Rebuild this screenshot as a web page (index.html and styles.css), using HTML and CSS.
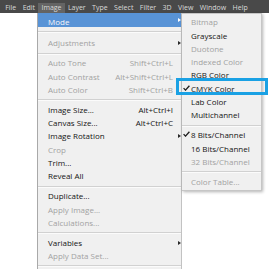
FILE: index.html
```html
<!DOCTYPE html>
<html lang="en">
<head>
    <meta charset="UTF-8">
    <meta name="viewport" content="width=device-width, initial-scale=1.0">
    <title>Image Mode Menu</title>
    <link rel="stylesheet" href="styles.css">
</head>
<body>

<div class="menubar">
    <span>File</span>
    <span>Edit</span>
    <span class="open">Image</span>
    <span>Layer</span>
    <span>Type</span>
    <span>Select</span>
    <span>Filter</span>
    <span>3D</span>
    <span>View</span>
    <span>Window</span>
    <span>Help</span>
</div>

<div class="stage">
    <div class="menu main">
        <div class="item hot"><span>Mode</span><i class="arr"></i></div>
        <div class="sep first"></div>
        <div class="item off"><span>Adjustments</span><i class="arr"></i></div>
        <div class="sep"></div>
        <div class="item off"><span>Auto Tone</span><span class="key">Shift+Ctrl+L</span></div>
        <div class="item off"><span>Auto Contrast</span><span class="key">Alt+Shift+Ctrl+L</span></div>
        <div class="item off"><span>Auto Color</span><span class="key">Shift+Ctrl+B</span></div>
        <div class="sep"></div>
        <div class="item"><span>Image Size...</span><span class="key">Alt+Ctrl+I</span></div>
        <div class="item"><span>Canvas Size...</span><span class="key">Alt+Ctrl+C</span></div>
        <div class="item"><span>Image Rotation</span><i class="arr"></i></div>
        <div class="item off"><span>Crop</span></div>
        <div class="item"><span>Trim...</span></div>
        <div class="item"><span>Reveal All</span></div>
        <div class="sep"></div>
        <div class="item"><span>Duplicate...</span></div>
        <div class="item off"><span>Apply Image...</span></div>
        <div class="item off"><span>Calculations...</span></div>
        <div class="sep"></div>
        <div class="item"><span>Variables</span><i class="arr"></i></div>
        <div class="item off"><span>Apply Data Set...</span></div>
        <div class="sep"></div>
    </div>

    <div class="menu sub">
        <div class="item off"><span></span><span>Bitmap</span></div>
        <div class="item"><span></span><span>Grayscale</span></div>
        <div class="item off"><span></span><span>Duotone</span></div>
        <div class="item off"><span></span><span>Indexed Color</span></div>
        <div class="item"><span></span><span>RGB Color</span></div>
        <div class="item mark">
            <svg class="check" width="7" height="6" viewBox="0 0 7 6"><path d="M0.6 3.1 L2.5 5.1 L6.4 0.7" fill="none" stroke="#1c1c1c" stroke-width="1.3"/></svg>
            <span>CMYK Color</span>
        </div>
        <div class="item"><span></span><span>Lab Color</span></div>
        <div class="item"><span></span><span>Multichannel</span></div>
        <div class="sep"></div>
        <div class="item">
            <svg class="check" width="7" height="6" viewBox="0 0 7 6"><path d="M0.6 3.1 L2.5 5.1 L6.4 0.7" fill="none" stroke="#1c1c1c" stroke-width="1.3"/></svg>
            <span>8 Bits/Channel</span>
        </div>
        <div class="item"><span></span><span>16 Bits/Channel</span></div>
        <div class="item off"><span></span><span>32 Bits/Channel</span></div>
        <div class="sep"></div>
        <div class="item off"><span></span><span>Color Table...</span></div>
    </div>
</div>

</body>
</html>
```

FILE: styles.css
```css
body {
    margin: 0;
    height: 269px;
    overflow: hidden;
    background: #ffffff;
    font-family: "Open Sans", sans-serif;
}
.menubar {
    display: flex;
    align-items: flex-end;
    height: 13px;
    padding-left: 2px;
    background: #494949;
}
.menubar span {
    height: 10px;
    line-height: 10px;
    padding: 0 3.2px;
    font-size: 7px;
    color: #d9d9d9;
}
.menubar .open {
    background: #646464;
}
.stage {
    display: flex;
    align-items: flex-start;
    padding-left: 37px;
}
.menu {
    background: #f0f0f0;
    font-size: 8px;
    color: #141414;
    box-sizing: border-box;
}
.main {
    width: 145px;
    height: 256px;
    border-left: 1px solid #a9a9a9;
    border-right: 1px solid #c2c2c2;
}
.sub {
    width: 80px;
    padding: 1.25px 0 1.6px;
    border: 1px solid #c6c6c6;
    border-left: none;
    box-shadow: 1px 1px 3px rgba(0, 0, 0, 0.3);
}
.item {
    display: grid;
    height: 13.3px;
    line-height: 13.3px;
    white-space: nowrap;
}
.main .item {
    grid-template-columns: 1fr auto 8px;
    padding-left: 10px;
}
.main .item .key {
    grid-column: 2;
}
.main .item .arr {
    grid-column: 3;
    align-self: center;
    width: 0;
    height: 0;
    margin-left: 4.5px;
    border-left: 3px solid #2a2a2a;
    border-top: 2.5px solid transparent;
    border-bottom: 2.5px solid transparent;
}
.main .item.hot {
    height: 14.3px;
    padding-top: 4px;
    line-height: 10.3px;
    box-sizing: border-box;
    background: #5893d6;
    color: #f4f6fa;
}
.main .item.hot .arr {
    border-left-color: #ffffff;
    margin-top: -4px;
}
.sub .item {
    grid-template-columns: 8px 1fr;
    padding-left: 1px;
}
.check {
    align-self: center;
    margin-top: -1px;
}
.item.off {
    color: #a2a2a2;
}
.item.mark {
    position: relative;
}
.item.mark::after {
    content: "";
    position: absolute;
    left: -6px;
    right: -7px;
    top: -3.25px;
    bottom: 0;
    border: 3px solid #1aa1e4;
}
.sep {
    height: 1px;
    margin: 3px 0 1.7px;
    background: #d1d1d1;
    border-bottom: 1px solid #fbfbfb;
}
.sep.first {
    margin: 3.7px 0 3.3px;
}
```
